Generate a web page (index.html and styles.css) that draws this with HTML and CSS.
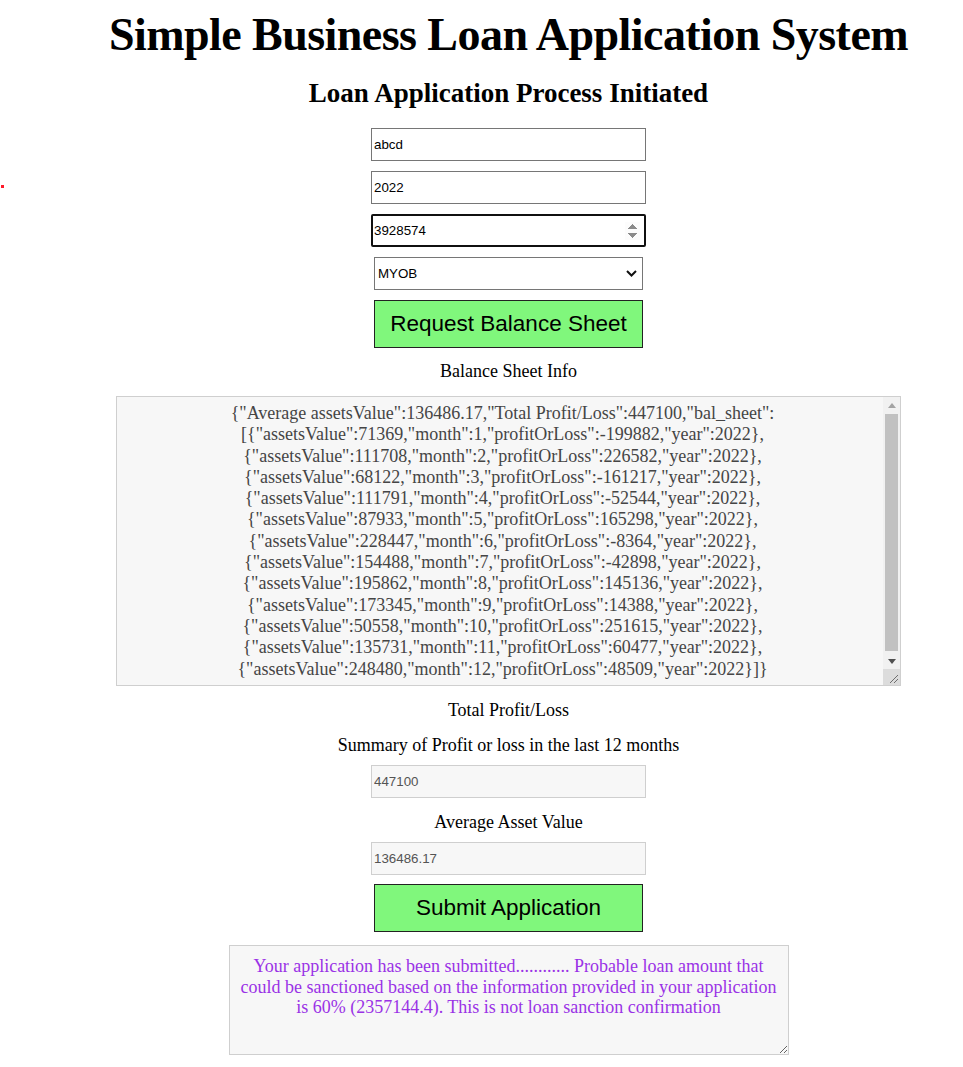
FILE: index.html
```html
<!DOCTYPE html>
<html lang="en">
<head>
<meta charset="utf-8">
<title>Simple Business Loan Application System</title>
<link rel="stylesheet" href="styles.css">
</head>
<body>
<span class="dot"></span>
<main class="page">
  <h1 class="title">Simple Business Loan Application System</h1>
  <h2 class="subtitle">Loan Application Process Initiated</h2>
  <form class="form">
    <input class="field" type="text" value="abcd">
    <input class="field" type="text" value="2022">
    <input class="field field-focus" type="number" value="3928574">
    <div class="picker-wrap">
      <select class="picker">
        <option>MYOB</option>
        <option>Xero</option>
      </select>
      <svg class="chevron" width="11" height="7" viewBox="0 0 11 7" aria-hidden="true">
        <path d="M1 1 L5.5 5.5 L10 1" fill="none" stroke="#111" stroke-width="2"/>
      </svg>
    </div>
    <button class="action" type="button">Request Balance Sheet</button>
    <p class="label label-first">Balance Sheet Info</p>
    <div class="sheet-wrap">
      <textarea class="sheet" readonly>{"Average assetsValue":136486.17,"Total Profit/Loss":447100,"bal_sheet":[{"assetsValue":71369,"month":1,"profitOrLoss":-199882,"year":2022},{"assetsValue":111708,"month":2,"profitOrLoss":226582,"year":2022},{"assetsValue":68122,"month":3,"profitOrLoss":-161217,"year":2022},{"assetsValue":111791,"month":4,"profitOrLoss":-52544,"year":2022},{"assetsValue":87933,"month":5,"profitOrLoss":165298,"year":2022},{"assetsValue":228447,"month":6,"profitOrLoss":-8364,"year":2022},{"assetsValue":154488,"month":7,"profitOrLoss":-42898,"year":2022},{"assetsValue":195862,"month":8,"profitOrLoss":145136,"year":2022},{"assetsValue":173345,"month":9,"profitOrLoss":14388,"year":2022},{"assetsValue":50558,"month":10,"profitOrLoss":251615,"year":2022},{"assetsValue":135731,"month":11,"profitOrLoss":60477,"year":2022},{"assetsValue":248480,"month":12,"profitOrLoss":48509,"year":2022}]}</textarea>
      <div class="scrollbar" aria-hidden="true">
        <div class="sb-btn">
          <svg width="8" height="5" viewBox="0 0 8 5"><path d="M0 5 L4 0 L8 5 Z" fill="#a3a3a3"/></svg>
        </div>
        <div class="sb-track"><div class="sb-thumb"></div></div>
        <div class="sb-btn">
          <svg width="8" height="5" viewBox="0 0 8 5"><path d="M0 0 L8 0 L4 5 Z" fill="#505050"/></svg>
        </div>
        <div class="sb-corner">
          <svg width="16" height="16" viewBox="0 0 16 16"><path d="M14 6 L6 14 M14 10 L10 14" stroke="#6e6e6e" stroke-width="1"/></svg>
        </div>
      </div>
    </div>
    <p class="label label-gap">Total Profit/Loss</p>
    <p class="label label-gap">Summary of Profit or loss in the last 12 months</p>
    <input class="field field-ro field-after-label" type="text" value="447100" readonly>
    <p class="label label-gap">Average Asset Value</p>
    <input class="field field-ro field-after-label" type="text" value="136486.17" readonly>
    <button class="action action-submit" type="button">Submit Application</button>
    <textarea class="result" readonly>Your application has been submitted............ Probable loan amount that could be sanctioned based on the information provided in your application is 60% (2357144.4). This is not loan sanction confirmation</textarea>
  </form>
</main>
</body>
</html>
```
FILE: styles.css
```css
html, body {
  margin: 0;
  padding: 0;
  background: #fff;
}

body {
  font-family: "Liberation Serif", "Times New Roman", serif;
  color: #000;
  position: relative;
}

.dot {
  position: absolute;
  left: 1px;
  top: 185px;
  width: 3px;
  height: 3px;
  background: #ff1a2a;
}

.page {
  box-sizing: border-box;
  width: 100%;
  padding-left: 54px;
  display: flex;
  flex-direction: column;
  align-items: center;
  text-align: center;
}

.title {
  margin: 8px 0 0;
  font-size: 46px;
  line-height: 53px;
  font-weight: bold;
  letter-spacing: -0.55px;
  white-space: nowrap;
}

.subtitle {
  margin: 18px 0 0;
  font-size: 27px;
  line-height: 29px;
  font-weight: bold;
}

.form {
  margin: 20px 0 0;
  display: flex;
  flex-direction: column;
  align-items: center;
}

.field {
  box-sizing: border-box;
  width: 275px;
  height: 33px;
  margin: 0 0 10px;
  padding: 1px 2px;
  border: 1px solid #767676;
  border-radius: 0;
  background: #fff;
  font-family: "Liberation Sans", Arial, sans-serif;
  font-size: 13.33px;
  color: #000;
  outline: none;
}

.field-focus {
  border: 2px solid #101010;
  border-radius: 2px;
  padding: 1px 4px 1px 1px;
}

.field-focus::-webkit-inner-spin-button {
  opacity: 1;
  height: 18px;
}

.field-ro {
  background: #f7f7f7;
  border-color: #cfcfcf;
  color: #545454;
}

.field-after-label {
  margin: 9px 0 0;
}

.picker-wrap {
  position: relative;
  width: 269px;
  height: 33px;
  margin: 0 0 10px;
}

.picker {
  -webkit-appearance: none;
  appearance: none;
  box-sizing: border-box;
  width: 269px;
  height: 33px;
  margin: 0;
  padding: 0 3px;
  border: 1px solid #767676;
  border-radius: 0;
  background: #fff;
  font-family: "Liberation Sans", Arial, sans-serif;
  font-size: 13.33px;
  color: #000;
}

.chevron {
  position: absolute;
  right: 6px;
  top: 13px;
  pointer-events: none;
}

.action {
  box-sizing: border-box;
  width: 269px;
  height: 48px;
  margin: 0;
  padding: 0;
  border: 1px solid #222;
  border-radius: 0;
  background: #80f77c;
  font-family: "Liberation Sans", Arial, sans-serif;
  font-size: 22.5px;
  color: #000;
}

.action-submit {
  margin-top: 9px;
}

.label {
  margin: 0;
  font-size: 18px;
  line-height: 21px;
}

.label-first {
  margin: 13px 0 0;
}

.label-gap {
  margin: 14px 0 0;
}

.sheet-wrap {
  position: relative;
  width: 785px;
  height: 290px;
  margin: 14px 0 0;
}

.sheet {
  display: block;
  box-sizing: border-box;
  width: 785px;
  height: 290px;
  margin: 0;
  padding: 6px 14px 26px 2px;
  border: 1px solid #cfcfcf;
  border-radius: 0;
  background: #f7f7f7;
  font-family: "Liberation Serif", "Times New Roman", serif;
  font-size: 18px;
  line-height: 21.3px;
  color: #454545;
  text-align: center;
  overflow: hidden;
  resize: none;
}

.scrollbar {
  position: absolute;
  top: 1px;
  right: 1px;
  bottom: 1px;
  width: 17px;
  display: flex;
  flex-direction: column;
  background: #f1f1f1;
}

.sb-btn {
  height: 16px;
  display: flex;
  align-items: center;
  justify-content: center;
  flex: none;
}

.sb-track {
  flex: 1;
  padding: 1px 2px 2px;
  display: flex;
}

.sb-thumb {
  flex: 1;
  background: #c1c1c1;
}

.sb-corner {
  height: 16px;
  flex: none;
  background: #dcdcdc;
  display: flex;
  justify-content: flex-end;
}

.result {
  box-sizing: border-box;
  width: 560px;
  height: 110px;
  margin: 13px 0 0;
  padding: 10px 10px;
  border: 1px solid #cfcfcf;
  border-radius: 0;
  background: #f7f7f7;
  font-family: "Liberation Serif", "Times New Roman", serif;
  font-size: 18px;
  line-height: 20.5px;
  color: #9a32e6;
  text-align: center;
  resize: both;
}
```
